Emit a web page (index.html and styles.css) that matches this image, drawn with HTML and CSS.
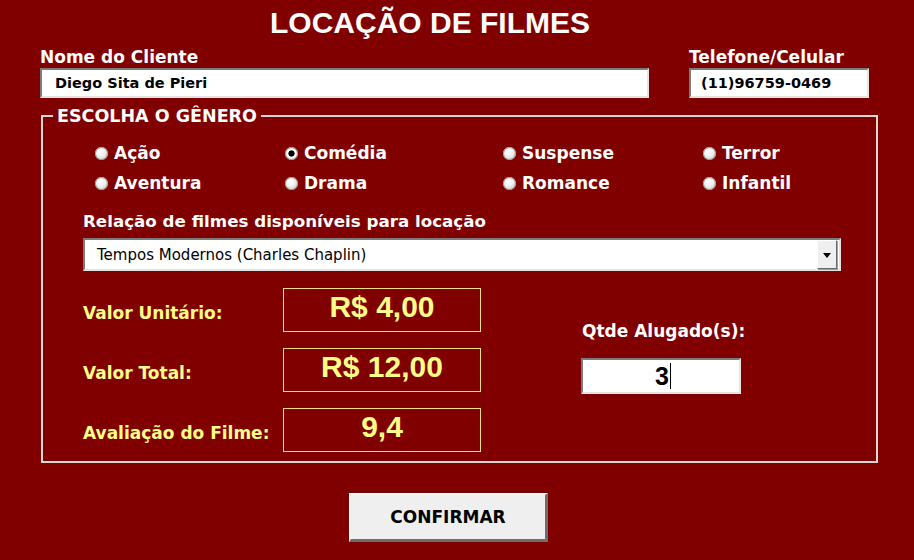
FILE: index.html
```html
<!DOCTYPE html>
<html lang="pt-BR">
<head>
<meta charset="utf-8">
<title>Locação de Filmes</title>
<link rel="stylesheet" href="styles.css">
</head>
<body>
<div class="app">
  <h1 class="title">LOCAÇÃO DE FILMES</h1>

  <div class="client-row">
    <div class="field field-name">
      <label class="field-label">Nome do Cliente</label>
      <div class="textbox">Diego Sita de Pieri</div>
    </div>
    <div class="field field-phone">
      <label class="field-label">Telefone/Celular</label>
      <div class="textbox textbox-phone">(11)96759-0469</div>
    </div>
  </div>

  <fieldset class="genre">
    <legend class="genre-legend">ESCOLHA O GÊNERO</legend>

    <div class="radios">
      <div class="radio"><span class="dot"></span>Ação</div>
      <div class="radio"><span class="dot checked"></span>Comédia</div>
      <div class="radio"><span class="dot"></span>Suspense</div>
      <div class="radio"><span class="dot"></span>Terror</div>
      <div class="radio"><span class="dot"></span>Aventura</div>
      <div class="radio"><span class="dot"></span>Drama</div>
      <div class="radio"><span class="dot"></span>Romance</div>
      <div class="radio"><span class="dot"></span>Infantil</div>
    </div>

    <div class="movie-label">Relação de filmes disponíveis para locação</div>
    <div class="combo">
      <span class="combo-text">Tempos Modernos (Charles Chaplin)</span>
      <span class="combo-btn"><span class="arrow"></span></span>
    </div>

    <div class="values">
      <div class="value-list">
        <div class="value-row">
          <span class="value-label">Valor Unitário:</span>
          <span class="value-box">R$ 4,00</span>
        </div>
        <div class="value-row">
          <span class="value-label">Valor Total:</span>
          <span class="value-box">R$ 12,00</span>
        </div>
        <div class="value-row">
          <span class="value-label">Avaliação do Filme:</span>
          <span class="value-box">9,4</span>
        </div>
      </div>
      <div class="qty">
        <div class="qty-label">Qtde Alugado(s):</div>
        <div class="qty-box"><span class="qty-num">3</span><span class="caret"></span></div>
      </div>
    </div>
  </fieldset>

  <div class="actions">
    <button class="confirm" type="button">CONFIRMAR</button>
  </div>
</div>
</body>
</html>
```

FILE: styles.css
```css
* { box-sizing: border-box; }

html, body {
  margin: 0;
  padding: 0;
  background: #800000;
}

.app {
  width: 914px;
  height: 560px;
  background: #800000;
  font-family: "DejaVu Sans", sans-serif;
  color: #ffffff;
  overflow: hidden;
}

.title {
  margin: 0;
  padding: 6px 54px 0 0;
  text-align: center;
  font-family: "Liberation Sans", Arial, sans-serif;
  font-weight: bold;
  font-size: 30px;
  line-height: 34px;
  color: #ffffff;
}

.client-row {
  display: flex;
  margin-top: 7px;
  padding-left: 40px;
  gap: 40px;
}

.field {
  display: flex;
  flex-direction: column;
  gap: 1px;
}

.field-name { width: 609px; }
.field-phone { width: 180px; }

.field-label {
  font-weight: bold;
  font-size: 17px;
  line-height: 20px;
  white-space: nowrap;
}

.textbox {
  height: 30px;
  background: #ffffff;
  border: 2px solid;
  border-color: #7c7c7c #e4e4e4 #e4e4e4 #7c7c7c;
  color: #000000;
  font-weight: bold;
  font-size: 14.5px;
  line-height: 26px;
  padding-left: 13px;
  white-space: nowrap;
}

.textbox-phone {
  padding-left: 10px;
}

.genre {
  margin: 8px 0 0 41px;
  width: 837px;
  height: 357px;
  border: 2px solid #d8d8d8;
  padding: 0 0 0 10px;
  min-width: 0;
}

.genre-legend {
  padding: 0 4px;
  font-weight: bold;
  font-size: 17.5px;
  line-height: 20px;
}

.radios {
  display: grid;
  grid-template-columns: 190px 218px 200px auto;
  row-gap: 10px;
  margin: 17px 0 0 42px;
}

.radio {
  display: flex;
  align-items: center;
  gap: 6px;
  font-weight: bold;
  font-size: 17px;
  line-height: 20px;
  white-space: nowrap;
}

.dot {
  width: 13px;
  height: 13px;
  border-radius: 50%;
  background: radial-gradient(circle at 40% 35%, #ffffff 0%, #eeeeee 45%, #a8a8a8 100%);
  box-shadow: inset 0 0 0 1px #9a9a9a;
  flex: none;
}

.dot.checked {
  background: radial-gradient(circle, #000000 0 2.8px, #ffffff 3.4px 4.6px, #bdbdbd 6.5px);
}

.movie-label {
  margin: 18px 0 0 30px;
  font-weight: bold;
  font-size: 16.7px;
  line-height: 20px;
  white-space: nowrap;
}

.combo {
  margin: 7px 0 0 30px;
  width: 758px;
  height: 33px;
  background: #ffffff;
  border: 2px solid;
  border-color: #7c7c7c #e4e4e4 #e4e4e4 #7c7c7c;
  display: flex;
  align-items: center;
  justify-content: space-between;
  padding: 0 2px 0 12px;
}

.combo-text {
  color: #000000;
  font-size: 15px;
  font-weight: normal;
  white-space: nowrap;
}

.combo-btn {
  width: 20px;
  height: 29px;
  background: #efefef;
  border: 1px solid;
  border-color: #ffffff #6a6a6a #6a6a6a #ffffff;
  box-shadow: 1px 1px 0 #a0a0a0;
  display: flex;
  align-items: center;
  justify-content: center;
}

.arrow {
  width: 0;
  height: 0;
  border-left: 4px solid transparent;
  border-right: 4px solid transparent;
  border-top: 5px solid #000000;
  margin-top: 2px;
}

.values {
  display: flex;
  margin: 17px 0 0 30px;
}

.value-list {
  display: flex;
  flex-direction: column;
  gap: 16px;
  width: 498px;
}

.value-row {
  display: flex;
  align-items: center;
  height: 44px;
}

.value-label {
  width: 200px;
  color: #ffff88;
  font-weight: bold;
  font-size: 17px;
  line-height: 20px;
  white-space: nowrap;
  padding-top: 6px;
}

.value-box {
  width: 198px;
  height: 44px;
  border: 1px solid #f0e080;
  color: #ffff88;
  font-family: "Liberation Sans", Arial, sans-serif;
  font-weight: bold;
  font-size: 30px;
  line-height: 36px;
  text-align: center;
}

.qty {
  display: flex;
  flex-direction: column;
  padding-top: 33px;
}

.qty-label {
  font-weight: bold;
  font-size: 17px;
  line-height: 20px;
  white-space: nowrap;
  margin-left: 1px;
}

.qty-box {
  margin-top: 17px;
  width: 160px;
  height: 36px;
  background: #ffffff;
  border: 2px solid;
  border-color: #7c7c7c #e4e4e4 #e4e4e4 #7c7c7c;
  display: flex;
  align-items: center;
  justify-content: center;
  padding-left: 4px;
}

.qty-num {
  color: #000000;
  font-family: "Liberation Sans Narrow", "Liberation Sans", sans-serif;
  font-stretch: condensed;
  font-weight: bold;
  font-size: 25px;
  line-height: 28px;
}

.caret {
  width: 1px;
  height: 26px;
  background: #000000;
  margin-left: 1px;
}

.actions {
  padding: 30px 0 0 349px;
}

.confirm {
  width: 199px;
  height: 49px;
  background: #efefef;
  border-style: solid;
  border-width: 2px 3px 3px 2px;
  border-color: #fafafa #6e6e6e #6e6e6e #fafafa;
  font-family: "DejaVu Sans", sans-serif;
  font-weight: bold;
  font-size: 17px;
  color: #000000;
  padding: 0;
}
```
